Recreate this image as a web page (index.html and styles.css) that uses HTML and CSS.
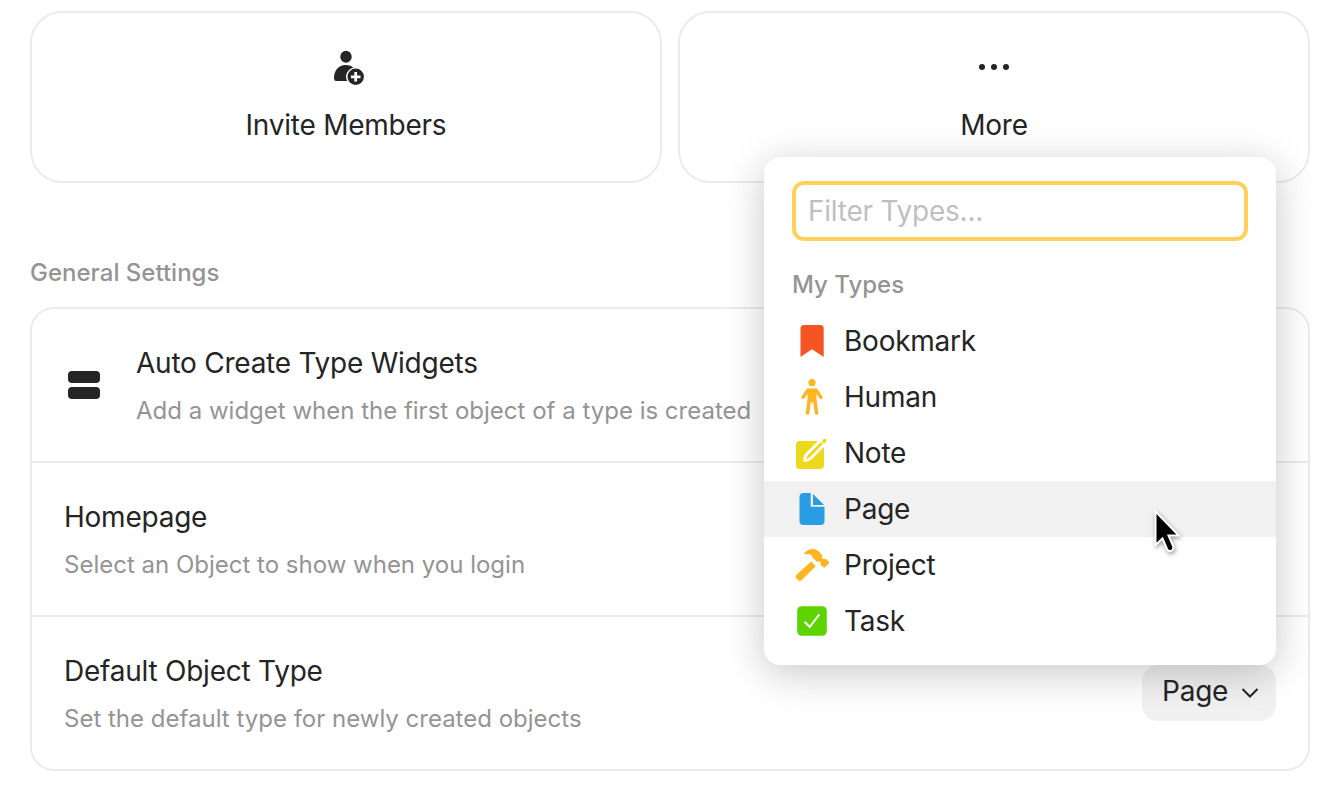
FILE: index.html
```html
<!DOCTYPE html>
<html lang="en">
<head>
<meta charset="utf-8">
<title>Space Settings</title>
<link rel="stylesheet" href="styles.css">
</head>
<body>
<main class="page">
  <div class="actions">
    <button class="action">
      <svg class="action-icon" width="40" height="40" viewBox="0 0 40 40">
        <ellipse cx="20" cy="11.8" rx="5.700" ry="6" fill="#252525"/>
        <path d="M21.300 36H10.300Q8 36 8 33.500C8 25.500 12.500 20 19.500 20C23.500 20 26 21.300 27.600 23.100C23 24.500 20.300 28 20.300 31.500Q20.300 34 21.300 36Z" fill="#252525"/>
        <circle cx="29.700" cy="31.800" r="9.500" fill="#fff"/>
        <circle cx="29.700" cy="31.800" r="8.200" fill="#252525"/>
        <path d="M29.700 27v9.600M24.900 31.800h9.600" stroke="#fff" stroke-width="2.700"/>
      </svg>
      <span>Invite Members</span>
    </button>
    <button class="action">
      <svg class="action-icon" width="40" height="40" viewBox="0 0 40 40" fill="#252525">
        <circle cx="8" cy="22" r="3"/><circle cx="20" cy="22" r="3"/><circle cx="32" cy="22" r="3"/>
      </svg>
      <span>More</span>
    </button>
  </div>

  <h2 class="section-title">General Settings</h2>
  <section class="panel">
    <div class="row">
      <svg class="row-icon" width="40" height="40" viewBox="0 0 40 40" fill="#252525">
        <rect x="4" y="6" width="32" height="12" rx="4"/><rect x="4" y="22" width="32" height="12" rx="4"/>
      </svg>
      <div class="row-text">
        <div class="row-name">Auto Create Type Widgets</div>
        <div class="row-desc">Add a widget when the first object of a type is created</div>
      </div>
    </div>
    <div class="row">
      <div class="row-text">
        <div class="row-name">Homepage</div>
        <div class="row-desc">Select an Object to show when you login</div>
      </div>
    </div>
    <div class="row">
      <div class="row-text">
        <div class="row-name">Default Object Type</div>
        <div class="row-desc">Set the default type for newly created objects</div>
      </div>
      <button class="select">
        <span>Page</span>
        <svg width="20" height="20" viewBox="0 0 20 20" fill="none" stroke="#252525" stroke-width="2"><path d="M2.500 8l7.500 7.500 7.500-7.500"/></svg>
      </button>
    </div>
  </section>
</main>

<div class="menu">
  <input class="filter" type="text" placeholder="Filter Types...">
  <div class="menu-label">My Types</div>
  <div class="item">
    <svg width="40" height="40" viewBox="0 0 40 40"><path d="M12 4h16Q31.700 4 31.700 7.500v28.400L20 28.200 8.500 35.900V7.500Q8.500 4 12 4z" fill="#f55522"/></svg>
    <span>Bookmark</span>
  </div>
  <div class="item">
    <svg width="40" height="40" viewBox="0 0 40 40" fill="#ffb522" stroke="#ffb522" stroke-linecap="round" stroke-linejoin="round">
      <circle cx="20" cy="5.700" r="3.600" stroke="none"/>
      <path d="M16.800 13h6.400l-.4 11h-5.600z" stroke-width="3"/>
      <path d="M16 13L11 20.400M24 13L29 20.400" fill="none" stroke-width="3.400"/>
      <path d="M17.300 23L15.500 36M22.700 23l1.900 13" fill="none" stroke-width="3.600"/>
    </svg>
    <span>Human</span>
  </div>
  <div class="item">
    <svg width="40" height="40" viewBox="0 0 40 40">
      <path d="M8 8h20L32 12v20q0 4-4 4H8q-4 0-4-4V12q0-4 4-4z" fill="#ecd91b"/>
      <path d="M28.700 7.200L15 21Q12.300 24 12.800 27.300Q16 27.700 19 25L32.700 11.300" fill="none" stroke="#fff" stroke-width="2.800"/>
      <path d="M29.800 8.200L31 6.700Q32.600 5 34 6.400Q35.200 7.800 33.700 9.300L32.200 10.700z" fill="#ecd91b"/>
    </svg>
    <span>Note</span>
  </div>
  <div class="item active">
    <svg width="40" height="40" viewBox="0 0 40 40" fill="#289de3">
      <path d="M11.500 4H18.700V17.800H32.500V32q0 4-4 4h-17q-4 0-4-4V8q0-4 4-4z"/>
      <path d="M21 5L32 16H21z"/>
    </svg>
    <span>Page</span>
  </div>
  <div class="item">
    <svg width="40" height="40" viewBox="0 0 40 40" fill="#ffb522">
      <path d="M19.200 16.500L23.700 21.300L10.400 34.500Q8.500 36.500 6.300 35.400L4 32.900Q3 31.200 5 29.300Z"/>
      <path d="M12.300 8.100C16.500 3.500 22.500 2.500 26.500 6.200L29.700 9.800Q30.600 11 29.900 12.500L31.500 14.300L33.800 14Q34.500 14 35 14.600L37 16.900Q37.600 17.700 36.900 18.400L32.900 22.300Q32.100 23 31.400 22.300L29 19.900Q28.500 19.300 28.700 18.500L28.900 17.800L27.400 16.300Q26 17.300 24.700 16.400L20.400 12.600C20.700 9.600 17 8.400 13.600 9.300Q11.800 9.500 12.300 8.100Z"/>
    </svg>
    <span>Project</span>
  </div>
  <div class="item">
    <svg width="40" height="40" viewBox="0 0 40 40"><rect x="5.200" y="5.200" width="29.600" height="29.600" rx="4.500" fill="#5dd400"/><path d="M12.500 20.800l5.200 5.200 9.600-12.700" fill="none" stroke="#fff" stroke-width="2"/></svg>
    <span>Task</span>
  </div>
</div>

<svg class="cursor" width="40" height="52" viewBox="0 0 40 52">
  <path d="M5.500 3.500V37L12.500 30.500L17 41Q18.500 44 21.300 42.800Q24.400 41.300 23.100 38.200L18.500 27.500H28.800Z" fill="#000" stroke="#fff" stroke-width="2"/>
</svg>
</body>
</html>
```
FILE: styles.css
```css
* { box-sizing: border-box; }
body {
  margin: 0;
  height: 786px;
  overflow: hidden;
  background: #fff;
  color: #252525;
  font-family: Inter, "Liberation Sans", sans-serif;
  font-size: 28px;
  line-height: 44px;
  letter-spacing: -0.24px;
}
button { font: inherit; color: inherit; letter-spacing: inherit; border: 0; padding: 0; }
svg { display: block; flex: none; }
.page { width: 1340px; padding: 11px 30px 0; }
.actions { display: grid; grid-template-columns: 1fr 1fr; gap: 16px; }
.action {
  display: flex;
  flex-direction: column;
  align-items: center;
  gap: 18px;
  height: 172px;
  padding-top: 32px;
  border: 2px solid #ebebeb;
  border-radius: 32px;
  background: #fff;
}
.section-title {
  margin: 72px 0 16px;
  color: #949494;
  font-size: 24px;
  font-weight: 500;
  line-height: 36px;
  letter-spacing: 0;
}
.panel { border: 2px solid #ebebeb; border-radius: 24px; }
.row {
  display: flex;
  align-items: center;
  height: 154px;
  padding: 0 32px;
  border-bottom: 2px solid #ebebeb;
}
.row:last-child { height: 152px; border-bottom: 0; }
.row-icon { margin-right: 32px; }
.row-text { flex: 1; }
.row-desc {
  margin-top: 8px;
  color: #949494;
  font-size: 24px;
  line-height: 36px;
  letter-spacing: 0;
}
.select {
  display: flex;
  align-items: center;
  gap: 12px;
  width: 134px;
  height: 56px;
  padding: 0 0 4px 20px;
  border-radius: 16px;
  background: #f1f1f1;
}
.menu {
  position: absolute;
  left: 764px;
  top: 157px;
  width: 512px;
  height: 508px;
  padding-top: 24px;
  border-radius: 16px;
  background: #fff;
  box-shadow: 0 8px 40px rgba(0, 0, 0, .22);
}
.filter {
  display: block;
  width: 456px;
  height: 60px;
  margin: 0 28px;
  padding: 0 12px;
  border: 4px solid #ffd15b;
  border-radius: 12px;
  outline: 0;
  font: inherit;
  letter-spacing: inherit;
}
.filter::placeholder { color: #bfbfbf; opacity: 1; }
.menu-label {
  margin: 26px 28px 10px;
  color: #949494;
  font-size: 24px;
  font-weight: 500;
  line-height: 36px;
  letter-spacing: 0;
}
.item { display: flex; align-items: center; gap: 12px; height: 56px; padding: 0 28px; }
.active { background: #f1f1f1; }
.cursor {
  position: absolute;
  left: 1150px;
  top: 508px;
  filter: drop-shadow(1px 2px 2px rgba(0, 0, 0, .4));
}
```
